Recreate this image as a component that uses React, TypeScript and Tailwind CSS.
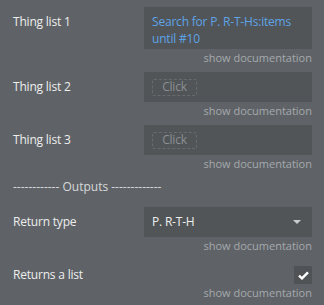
import React from "react";

const font = { fontFamily: '"Open Sans", "Liberation Sans", sans-serif' };

function Doc() {
  return (
    <div className="mt-[2px] flex justify-end">
      <span className="text-[11px] leading-[14px] text-[#a5a9ad]">show documentation</span>
    </div>
  );
}

function ClickBox() {
  return (
    <div className="flex h-[30px] w-[168px] items-center bg-[#515558] pl-[8px]">
      <div className="flex h-[17px] w-[45px] items-center justify-center rounded-[2px] border border-dashed border-[#676b6f] text-[12px] tracking-[-0.2px] text-[#8b8f93]">
        Click
      </div>
    </div>
  );
}

function Label({ children }: { children: React.ReactNode }) {
  return (
    <div className="w-[131px] shrink-0 pt-[6px] text-[12px] leading-[17px] tracking-[-0.2px] text-[#eeeeee]">
      {children}
    </div>
  );
}

export default function App() {
  return (
    <div style={font} className="h-[305px] w-[324px] overflow-hidden bg-[#5f6367] pl-[13px] pr-[12px] pt-[7px]">
      <div>
        <div className="flex">
          <Label>Thing list 1</Label>
          <div className="w-[168px] bg-[#515558] pb-[2px] pl-[8px] pt-[6px] text-[12px] leading-[17px] tracking-[-0.2px] text-[#5ea3e6]">
            Search for P. R-T-Hs:items until #10
          </div>
        </div>
        <Doc />
      </div>

      <div className="mt-[7px]">
        <div className="flex">
          <Label>Thing list 2</Label>
          <ClickBox />
        </div>
        <Doc />
      </div>

      <div className="mt-[7px]">
        <div className="flex">
          <Label>Thing list 3</Label>
          <ClickBox />
        </div>
        <Doc />
      </div>

      <div className="mt-[7px] h-[17px] text-[12px] leading-[17px] text-[#d7d9db]">
        ------------ Outputs -------------
      </div>

      <div className="mt-[12px]">
        <div className="flex">
          <Label>Return type</Label>
          <div className="flex h-[30px] w-[168px] items-center justify-between bg-[#515558] pl-[8px] pr-[11px] text-[12px] tracking-[-0.2px] text-[#eeeeee]">
            <span>P. R-T-H</span>
            <svg width="8" height="4" viewBox="0 0 8 4">
              <polygon points="0,0 8,0 4,4" fill="#c9cbcd" />
            </svg>
          </div>
        </div>
        <Doc />
      </div>

      <div className="mt-[7px]">
        <div className="flex">
          <Label>Returns a list</Label>
          <div className="flex flex-1 justify-end pt-[6px]">
            <div className="flex h-[18px] w-[18px] items-center justify-center rounded-[1px] bg-[#4f5356]">
              <svg width="11" height="9" viewBox="0 0 11 9">
                <path d="M1 4.6 L4 7.4 L10 1.4" stroke="#ffffff" strokeWidth="2.4" fill="none" />
              </svg>
            </div>
          </div>
        </div>
        <Doc />
      </div>
    </div>
  );
}
